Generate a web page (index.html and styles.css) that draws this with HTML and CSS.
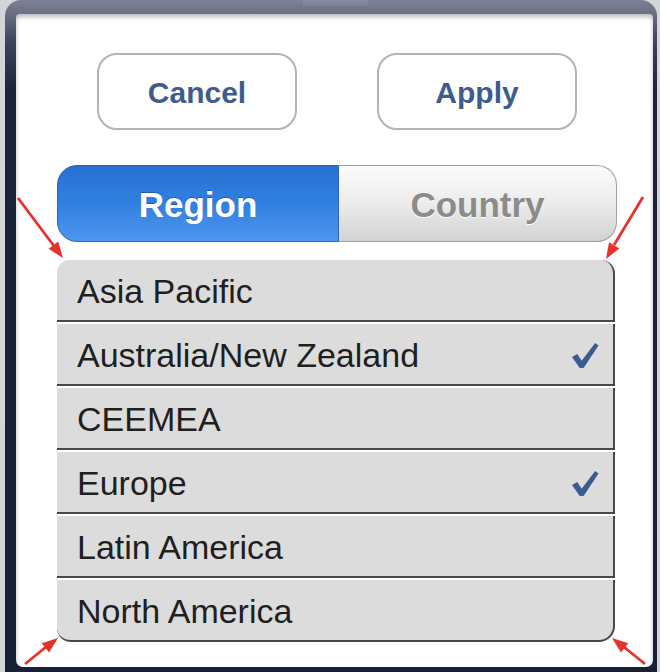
FILE: index.html
```html
<!DOCTYPE html>
<html>
<head>
<meta charset="utf-8">
<link rel="stylesheet" href="styles.css">
</head>
<body>
<div class="screen">
  <div class="device">
    <div class="notch"></div>
    <div class="sheet">
      <div class="actions">
        <button class="btn">Cancel</button>
        <button class="btn">Apply</button>
      </div>
      <div class="segmented">
        <div class="seg seg-on">Region</div>
        <div class="seg seg-off">Country</div>
      </div>
      <ul class="list">
        <li class="row row-first"><span>Asia Pacific</span></li>
        <li class="row"><span>Australia/New Zealand</span>
          <svg class="check" viewBox="0 0 28 28"><path d="M0 15.5 L5.5 12.5 L10 19.5 L24 1 L27.5 3.5 L12 27 L8 27 Z" /></svg>
        </li>
        <li class="row"><span>CEEMEA</span></li>
        <li class="row"><span>Europe</span>
          <svg class="check" viewBox="0 0 28 28"><path d="M0 15.5 L5.5 12.5 L10 19.5 L24 1 L27.5 3.5 L12 27 L8 27 Z" /></svg>
        </li>
        <li class="row"><span>Latin America</span></li>
        <li class="row row-last"><span>North America</span></li>
      </ul>
    </div>
  </div>
  <svg class="arrows" viewBox="0 0 660 672" width="660" height="672">
    <g class="arrow">
      <line x1="18" y1="198" x2="54" y2="246"/>
      <polygon points="63,258 58.2,241.6 48.6,248.8"/>
    </g>
    <g class="arrow">
      <line x1="643" y1="197" x2="614" y2="245"/>
      <polygon points="606,259 619.3,248.4 609,242.2"/>
    </g>
    <g class="arrow">
      <line x1="25" y1="664" x2="46" y2="647"/>
      <polygon points="58,638 49.1,652.6 41.7,643.2"/>
    </g>
    <g class="arrow">
      <line x1="645" y1="664" x2="624" y2="647"/>
      <polygon points="612,638 628.3,643.2 620.9,652.6"/>
    </g>
  </svg>
</div>
</body>
</html>
```

FILE: styles.css
```css
* { box-sizing: border-box; }

html, body {
  margin: 0;
  padding: 0;
  background: #d6d6d8;
}

.screen {
  position: relative;
  width: 660px;
  height: 672px;
  overflow: hidden;
  background: #d4d5d8;
  font-family: "Liberation Sans", Arial, sans-serif;
}

.device {
  position: relative;
  margin-left: 5px;
  width: 652px;
  height: 672px;
  padding: 14px 4px 5px 11px;
  border-radius: 16px 16px 0 0;
  background: linear-gradient(to bottom, #7e8296 0, #6a6e82 14px, #3e4660 40px, #1c2438 90px, #172036 100%);
}

.notch {
  position: absolute;
  top: 0;
  left: 298px;
  width: 65px;
  height: 6px;
  background: linear-gradient(to bottom, #8a8ca4, #7c8096);
}

.sheet {
  width: 637px;
  height: 653px;
  background: #ffffff;
  border-radius: 4px 4px 7px 7px;
  box-shadow: inset 0 3px 4px rgba(60, 64, 80, 0.35);
  padding: 39px 0 0 41px;
}

.actions {
  display: flex;
  gap: 80px;
  padding-left: 40px;
}

.btn {
  width: 200px;
  height: 77px;
  border: 2px solid #b4b4b4;
  border-radius: 20px;
  background: #ffffff;
  font-family: "Liberation Sans", Arial, sans-serif;
  font-weight: bold;
  font-size: 30px;
  color: #3e5c8d;
  padding: 2px 0 0 0;
}

.segmented {
  display: flex;
  margin-top: 35px;
  width: 560px;
  height: 77px;
}

.seg {
  display: flex;
  align-items: center;
  justify-content: center;
  font-weight: bold;
  font-size: 35px;
  padding-top: 2px;
}

.seg-on {
  width: 282px;
  color: #ffffff;
  border: 1px solid #2a64b8;
  border-radius: 20px 0 0 20px;
  background: linear-gradient(to bottom, #2770d2 0%, #3080e0 50%, #4e96ee 100%);
  text-shadow: 0 -1px 0 rgba(0, 0, 0, 0.25);
}

.seg-off {
  flex: 1;
  color: #8b8b8b;
  border: 1px solid #a0a0a0;
  border-left: none;
  border-radius: 0 20px 20px 0;
  background: linear-gradient(to bottom, #fbfbfb 0%, #ececec 50%, #d2d2d2 100%);
  text-shadow: 0 1px 0 #ffffff;
}

.list {
  list-style: none;
  margin: 18px 0 0 0;
  padding: 0;
  width: 558px;
}

.row {
  display: flex;
  align-items: center;
  justify-content: space-between;
  height: 62px;
  margin-bottom: 2px;
  padding: 2px 14px 0 20px;
  background: #dcdcdc;
  border-right: 2px solid #484848;
  border-bottom: 2px solid #484848;
  font-size: 34px;
  color: #1f1f1f;
}

.row-first {
  border-radius: 13px 14px 0 0;
}

.row-last {
  border-radius: 0 0 16px 14px;
}

.check {
  width: 27px;
  height: 27px;
  fill: #3a5b92;
}

.arrows {
  position: absolute;
  left: 0;
  top: 0;
  pointer-events: none;
}

.arrow line {
  stroke: #e5322b;
  stroke-width: 2.8;
}

.arrow polygon {
  fill: #e5322b;
}
```
